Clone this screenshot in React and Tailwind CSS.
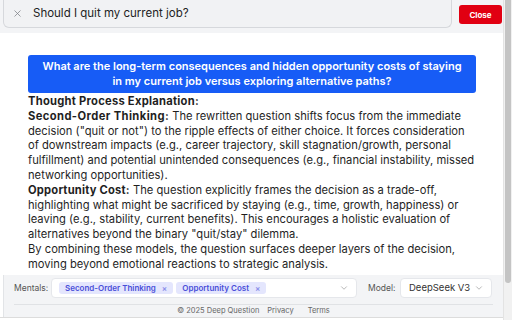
import { X, ChevronDown } from 'lucide-react';

const Chip = ({ label }) => (
  <span className="flex items-center gap-[6px] h-[12px] px-[6px] rounded-[3px] bg-[#e4e6fd] text-[#4a4fd9] text-[8px] font-semibold whitespace-nowrap">
    {label}
    <span className="text-[8px] text-[#8d91ea] leading-none">×</span>
  </span>
);

const Line = ({ children }) => <span className="block whitespace-nowrap">{children}</span>;

export default function App() {
  return (
    <div className="w-[512px] h-[320px] overflow-hidden flex bg-white font-['Inter',sans-serif] text-[#1f1f1f]">
      <div className="w-[503px] flex flex-col">
        {/* Header */}
        <div className="h-[33px] bg-[#f3f4f6] flex items-start pl-[3px] pr-[1px] gap-[7px]">
          <div className="w-[449px] h-[28px] bg-[#f1f2f4] border border-[#d6d8dc] border-t-0 rounded-b-[6px] flex items-center pl-[8px] gap-[10px]">
            <X size={11} strokeWidth={1.6} className="text-[#7a7d82]" />
            <span className="text-[11.5px] text-[#222]">Should I quit my current job?</span>
          </div>
          <button className="mt-[5px] w-[43px] h-[19px] rounded-[3px] bg-[#e10012] text-white text-[8px] font-bold">
            Close
          </button>
        </div>

        {/* Body */}
        <div className="flex-1 pt-[22px] pl-[28px] pr-[27px] text-[11.2px] leading-[14.8px]">
          <div className="bg-[#175cf6] rounded-[3px] text-white font-semibold text-[11px] leading-[15px] text-center py-[4px] px-[10px]">
            What are the long-term consequences and hidden opportunity costs of staying in my current job versus exploring alternative paths?
          </div>
          <div className="mt-[1px]">
            <p className="font-bold tracking-[0.25px]">Thought Process Explanation:</p>
            <p>
              <Line><span className="font-bold tracking-[0.4px]">Second-Order Thinking:</span> The rewritten question shifts focus from the immediate</Line>
              <Line>decision ("quit or not") to the ripple effects of either choice. It forces consideration</Line>
              <Line>of downstream impacts (e.g., career trajectory, skill stagnation/growth, personal</Line>
              <Line>fulfillment) and potential unintended consequences (e.g., financial instability, missed</Line>
              <Line>networking opportunities).</Line>
            </p>
            <p>
              <Line><span className="font-bold tracking-[0.2px]">Opportunity Cost:</span> The question explicitly frames the decision as a trade-off,</Line>
              <Line>highlighting what might be sacrificed by staying (e.g., time, growth, happiness) or</Line>
              <Line>leaving (e.g., stability, current benefits). This encourages a holistic evaluation of</Line>
              <Line>alternatives beyond the binary "quit/stay" dilemma.</Line>
            </p>
            <p>
              <Line>By combining these models, the question surfaces deeper layers of the decision,</Line>
              <Line>moving beyond emotional reactions to strategic analysis.</Line>
            </p>
          </div>
        </div>

        {/* Bottom bar */}
        <div className="h-[42px] bg-[#f3f4f6] border-l border-[#e2e4e7] ml-[3px] flex flex-col">
          <div className="flex items-center pt-[3px] pl-[10px] pr-[9px]">
            <span className="w-[37px] text-[8.5px] text-[#555]">Mentals:</span>
            <div className="w-[306px] h-[20px] bg-white rounded-[4px] border border-[#e5e7eb] flex items-center pl-[7px] pr-[7px] gap-[3px]">
              <Chip label="Second-Order Thinking" />
              <Chip label="Opportunity Cost" />
              <ChevronDown size={10} className="ml-auto text-[#aaa]" />
            </div>
            <span className="ml-[11px] w-[32px] text-[8.5px] text-[#555]">Model:</span>
            <div className="w-[92px] h-[20px] bg-white rounded-[4px] border border-[#e5e7eb] flex items-center pl-[8px] pr-[7px]">
              <span className="text-[9.5px] text-[#333] whitespace-nowrap">DeepSeek V3</span>
              <ChevronDown size={10} className="ml-auto text-[#aaa]" />
            </div>
          </div>
          <div className="mt-[6px] mx-[10px] border-t border-[#e0e2e5]" />
          <div className="flex justify-center gap-[8px] text-[7.5px] text-[#666] leading-[10px] pt-[1px]">
            <span>© 2025 Deep Question</span>
            <span>Privacy</span>
            <span className="ml-[6px]">Terms</span>
          </div>
        </div>
        <div className="h-[3px] border-t border-[#dcdcdc] bg-white" />
      </div>

      {/* Scrollbar */}
      <div className="w-[9px] bg-[#f1f1f1] border-l border-[#e3e3e3] flex justify-center">
        <div className="w-[6px] h-[283px] bg-[#c4c4c4] rounded-b-[3px]" />
      </div>
    </div>
  );
}
